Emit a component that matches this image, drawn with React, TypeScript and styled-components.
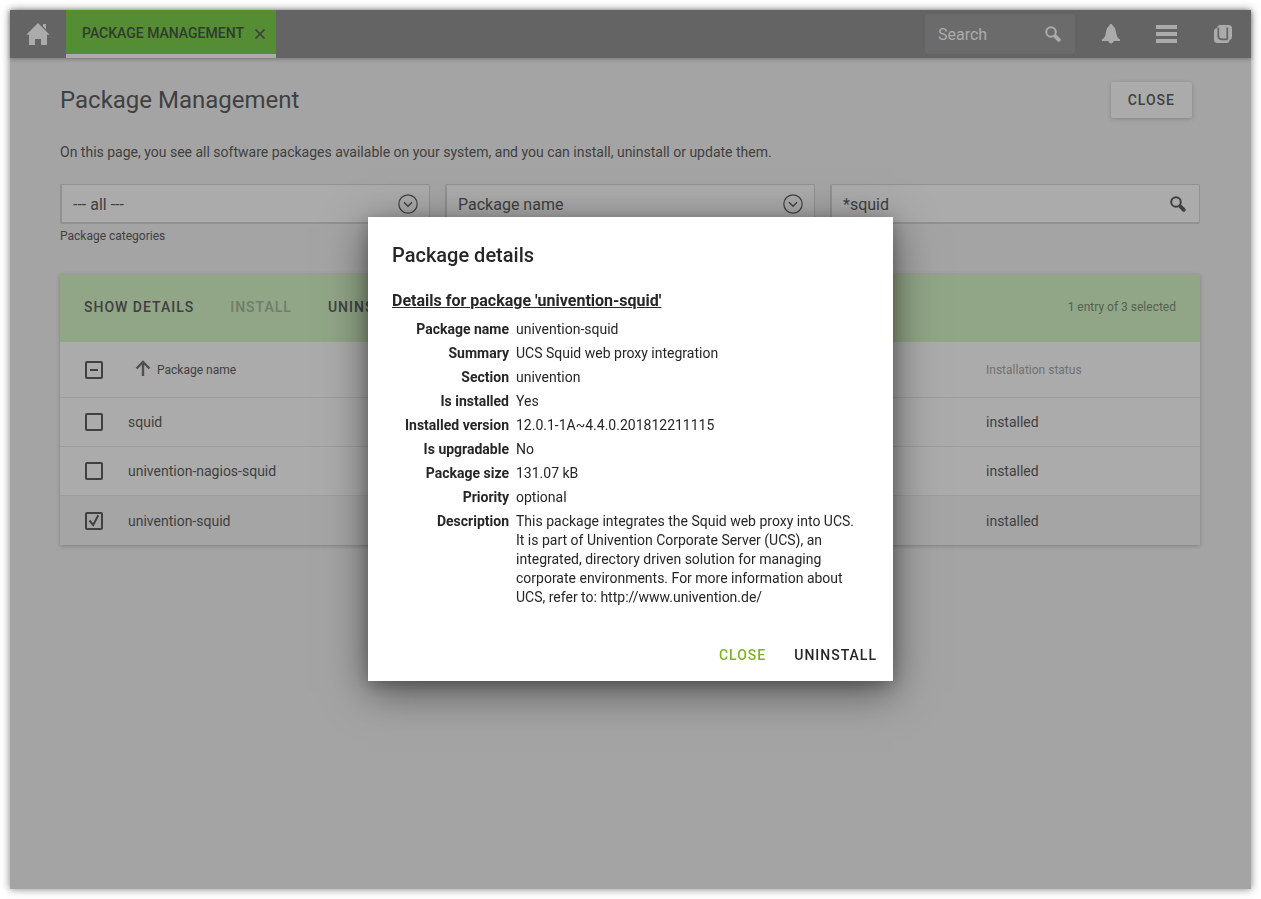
import React from "react";
import styled, { createGlobalStyle } from "styled-components";

const GlobalStyle = createGlobalStyle`
  * { box-sizing: border-box; }
  body {
    margin: 0;
    background: #fff;
    color: #404040;
    font-family: Roboto, "Liberation Sans", sans-serif;
    font-size: 14px;
    line-height: 20px;
  }
  button, input, select { font: inherit; color: inherit; }
  button { border: 0; padding: 0; background: none; cursor: pointer; }
  svg { display: block; }
`;

const Frame = styled.div`
  padding: 10px;
`;

const Desktop = styled.div`
  display: flex;
  flex-direction: column;
  min-height: calc(100vh - 20px);
  background: #a4a4a4;
  box-shadow: 0 0 8px rgba(0, 0, 0, 0.5);
`;

const TopBar = styled.header`
  display: flex;
  align-items: stretch;
  height: 48px;
  background: #646464;
  color: #ababab;
  box-shadow: 0 1px 4px rgba(0, 0, 0, 0.3);
`;

const IconButton = styled.button`
  display: flex;
  align-items: center;
  justify-content: center;
  width: 56px;
`;

const Tab = styled.div`
  display: flex;
  align-items: center;
  gap: 10px;
  padding: 2px 10px 0 16px;
  background: #558d34;
  border-bottom: 4px solid #ababab;
  color: #303c2a;
  font-weight: 500;
`;

const TabClose = styled.button`
  padding: 2px 1px 0;
  color: #404040;
`;

const Spacer = styled.div`
  flex: 1;
`;

const SearchBox = styled.label`
  display: flex;
  align-items: center;
  width: 150px;
  margin: 4px 8px 4px 0;
  padding: 0 14px 0 13px;
  border-radius: 4px;
  background: #6b6b6b;
  font-size: 16px;
`;

const PlainInput = styled.input`
  flex: 1;
  min-width: 0;
  padding: 2px 0 0;
  border: 0;
  outline: 0;
  background: none;
  &::placeholder { color: inherit; opacity: 1; }
`;

const Content = styled.main`
  padding: 24px 51px 24px 50px;
`;

const TitleRow = styled.div`
  display: flex;
  align-items: center;
  justify-content: space-between;
  padding-right: 8px;
`;

const PageTitle = styled.h1`
  margin: 0;
  font-size: 24px;
  font-weight: 400;
  line-height: 36px;
`;

const RaisedButton = styled.button`
  height: 36px;
  padding: 0 17px;
  border-radius: 2px;
  background: #ababab;
  box-shadow: 0 1px 4px rgba(0, 0, 0, 0.2);
  font-weight: 500;
  letter-spacing: 1px;
`;

const Intro = styled.p`
  margin: 24px 0 22px;
`;

const Filters = styled.div`
  display: grid;
  grid-template-columns: repeat(3, 1fr);
  gap: 15px;
`;

const Field = styled.div`
  min-width: 0;
`;

const FieldBox = styled.div`
  position: relative;
  display: flex;
  align-items: center;
  height: 40px;
  padding: 0 13px 0 11px;
  border: solid #919191;
  border-width: 1px 1px 2px 2px;
  border-radius: 2px;
  background: #ababab;
  font-size: 16px;
`;

const Select = styled.select`
  appearance: none;
  flex: 1;
  height: 100%;
  min-width: 0;
  padding: 2px 0 0;
  border: 0;
  outline: 0;
  background: none;
`;

const FieldLabel = styled.label`
  display: block;
  padding-top: 2px;
  font-size: 12px;
`;

const Grid = styled.section`
  margin-top: 28px;
  background: #ababab;
  box-shadow: 0 1px 4px rgba(0, 0, 0, 0.22);
`;

const GridBar = styled.div`
  display: flex;
  align-items: center;
  gap: 36px;
  height: 68px;
  padding: 0 24px 2px;
  background: #91a587;
`;

const TextButton = styled.button<{ $accent?: boolean }>`
  color: ${(p) => (p.$accent ? "#7db523" : "inherit")};
  font-weight: 500;
  letter-spacing: 1px;
  &:disabled { color: #6f7e68; }
`;

const Selection = styled.span`
  margin-left: auto;
  color: #566150;
  font-size: 12px;
`;

const Table = styled.table`
  width: 100%;
  table-layout: fixed;
  border-collapse: separate;
  border-spacing: 0;
  text-align: left;
`;

const CheckCol = styled.col`
  width: 68px;
`;

const StatusCol = styled.col`
  width: 214px;
`;

const HeadCell = styled.th<{ $muted?: boolean }>`
  height: 56px;
  padding: 0;
  border-bottom: 1px solid #9e9e9e;
  color: ${(p) => (p.$muted ? "#717171" : "inherit")};
  font-size: 12px;
  font-weight: 400;
`;

const SortLabel = styled.span`
  display: flex;
  align-items: center;
  gap: 6px;
  padding-left: 7px;
`;

const Row = styled.tr<{ $selected?: boolean }>`
  background: ${(p) => (p.$selected ? "#a5a5a5" : "#ababab")};
`;

const Cell = styled.td`
  height: 49px;
  padding: 0;
  tr:not(:last-child) > & { border-bottom: 1px solid #9e9e9e; }
`;

const CheckWrap = styled.label`
  position: relative;
  display: block;
  width: 18px;
  height: 18px;
  margin-left: 25px;
`;

const Check = styled.input`
  appearance: none;
  display: block;
  width: 18px;
  height: 18px;
  margin: 0;
  border: 2px solid #404040;
  border-radius: 2px;
`;

const CheckMark = styled.svg`
  position: absolute;
  inset: 0;
  pointer-events: none;
`;

const Overlay = styled.div`
  position: fixed;
  inset: 0;
  display: flex;
  align-items: center;
  justify-content: center;
  padding-bottom: 1px;
`;

const Dialog = styled.div`
  width: 525px;
  max-width: 100%;
  padding: 24px 16px 16px 24px;
  background: #fff;
  color: #262626;
  box-shadow: 0 10px 40px rgba(0, 0, 0, 0.5), 0 4px 14px rgba(0, 0, 0, 0.22);
`;

const DialogTitle = styled.h2`
  margin: 0;
  font-size: 20px;
  font-weight: 500;
  line-height: 28px;
`;

const DetailsTitle = styled.h3`
  margin: 20px 0 7px;
  font-size: 16px;
  font-weight: 700;
  line-height: 24px;
  text-decoration: underline;
`;

const Details = styled.table`
  border-collapse: collapse;
  width: 468px;
  max-width: 100%;
  line-height: 19px;
`;

const Term = styled.th`
  width: 117px;
  padding: 0 0 5px;
  font-weight: 700;
  text-align: right;
  vertical-align: top;
  white-space: nowrap;
`;

const Value = styled.td`
  padding: 0 0 5px 7px;
  vertical-align: top;
`;

const Actions = styled.div`
  display: flex;
  justify-content: flex-end;
  gap: 28px;
  height: 20px;
  margin-top: 33px;
`;

const Magnifier = () => (
  <svg width="16" height="16" viewBox="0 0 16 16" fill="none" stroke="currentColor" aria-hidden="true">
    <circle cx="6" cy="6" r="4.8" strokeWidth="2" />
    <path d="M9.3 9.3l1.2 1.2" strokeWidth="2" />
    <path d="M10.600 10.600l3.200 3.200" strokeWidth="3.800" strokeLinecap="round" />
  </svg>
);

const Chevron = styled.svg`
  position: absolute;
  right: 11px;
  pointer-events: none;
`;

const ChevronCircle = () => (
  <Chevron width="20" height="20" viewBox="0 0 20 20" fill="none" stroke="currentColor" aria-hidden="true">
    <circle cx="10" cy="10" r="9.2" strokeWidth="1.2" />
    <path d="M6 8.3l4 4 4-4" strokeWidth="1.4" />
  </Chevron>
);

const rows = [
  { name: "squid", selected: false },
  { name: "univention-nagios-squid", selected: false },
  { name: "univention-squid", selected: true },
];

const details = [
  ["Package name", "univention-squid"],
  ["Summary", "UCS Squid web proxy integration"],
  ["Section", "univention"],
  ["Is installed", "Yes"],
  ["Installed version", "12.0.1-1A~4.4.0.201812211115"],
  ["Is upgradable", "No"],
  ["Package size", "131.07 kB"],
  ["Priority", "optional"],
  [
    "Description",
    "This package integrates the Squid web proxy into UCS. It is part of Univention Corporate Server (UCS), an integrated, directory driven solution for managing corporate environments. For more information about UCS, refer to: http://www.univention.de/",
  ],
];

export default function App() {
  return (
    <Frame>
      <GlobalStyle />
      <Desktop>
        <TopBar>
          <IconButton aria-label="Home">
            <svg width="24" height="24" viewBox="0 0 24 24" fill="currentColor">
              <path d="M12 1L.3 12.700H3V23h6v-6h6v6h6V12.700h2.700z" />
              <path d="M17 2h3v5.300l-3-3z" />
            </svg>
          </IconButton>
          <Tab>
            <span>PACKAGE MANAGEMENT</span>
            <TabClose aria-label="Close tab">
              <svg width="10" height="10" viewBox="0 0 10 10" fill="none" stroke="currentColor" strokeWidth="1.6">
                <path d="M.5.5l9 9M9.500.5l-9 9" />
              </svg>
            </TabClose>
          </Tab>
          <Spacer />
          <SearchBox>
            <PlainInput placeholder="Search" aria-label="Search" />
            <Magnifier />
          </SearchBox>
          <IconButton aria-label="Notifications">
            <svg width="18" height="20" viewBox="0 0 18 20" fill="currentColor">
              <path d="M9 0c1 0 1.500.7 1.800 1.700 1.900 1.300 2.800 3.500 3.200 6.300.5 3.800 1.400 6.300 4 7.500V17h-6.300c-.4 1.500-1.300 2.500-2.700 2.500S6.700 18.500 6.300 17H0v-1.500c2.600-1.200 3.500-3.700 4-7.500.4-2.800 1.300-5 3.200-6.300C7.500.7 8 0 9 0z" />
            </svg>
          </IconButton>
          <IconButton aria-label="Menu">
            <svg width="22" height="18" viewBox="0 0 22 18" fill="currentColor">
              <path d="M0 0h21v4H0zM0 7h21v4H0zM0 14h21v4H0z" />
            </svg>
          </IconButton>
          <IconButton aria-label="Univention">
            <svg width="18" height="18" viewBox="0 0 18 18" fill="currentColor">
              <rect x="3" y="0" width="15" height="15" rx="3.500" />
              <rect x="0" y="3" width="15.500" height="15" rx="3.500" />
              <path d="M4.300 2.500v8.500q0 3.300 3.300 3.300h6M13.300 2.500v11.800" fill="none" stroke="#646464" strokeWidth="1.700" />
            </svg>
          </IconButton>
        </TopBar>
        <Content>
          <TitleRow>
            <PageTitle>Package Management</PageTitle>
            <RaisedButton>CLOSE</RaisedButton>
          </TitleRow>
          <Intro>
            On this page, you see all software packages available on your system, and you can install, uninstall or update them.
          </Intro>
          <Filters>
            <Field>
              <FieldBox>
                <Select id="category"><option>--- all ---</option></Select>
                <ChevronCircle />
              </FieldBox>
              <FieldLabel htmlFor="category">Package categories</FieldLabel>
            </Field>
            <Field>
              <FieldBox>
                <Select aria-label="Search attribute"><option>Package name</option></Select>
                <ChevronCircle />
              </FieldBox>
            </Field>
            <Field>
              <FieldBox>
                <PlainInput aria-label="Package name" defaultValue="*squid" />
                <Magnifier />
              </FieldBox>
            </Field>
          </Filters>
          <Grid>
            <GridBar>
              <TextButton>SHOW DETAILS</TextButton>
              <TextButton disabled>INSTALL</TextButton>
              <TextButton>UNINSTALL</TextButton>
              <Selection>1 entry of 3 selected</Selection>
            </GridBar>
            <Table>
              <colgroup>
                <CheckCol />
                <col />
                <StatusCol />
              </colgroup>
              <thead>
                <tr>
                  <HeadCell>
                    <CheckWrap>
                      <Check type="checkbox" aria-label="Select all" />
                      <CheckMark width="18" height="18" viewBox="0 0 18 18" fill="none" stroke="#404040" strokeWidth="2">
                        <path d="M5 9h8" />
                      </CheckMark>
                    </CheckWrap>
                  </HeadCell>
                  <HeadCell>
                    <SortLabel>
                      <svg width="16" height="20" viewBox="0 0 16 20" fill="none" stroke="#505050" strokeWidth="2.4">
                        <path d="M8 16V2M1.500 8.500L8 2l6.500 6.500" />
                      </svg>
                      Package name
                    </SortLabel>
                  </HeadCell>
                  <HeadCell $muted>Installation status</HeadCell>
                </tr>
              </thead>
              <tbody>
                {rows.map((r) => (
                  <Row key={r.name} $selected={r.selected}>
                    <Cell>
                      <CheckWrap>
                        <Check type="checkbox" aria-label={r.name} defaultChecked={r.selected} />
                        {r.selected && (
                          <CheckMark width="18" height="18" viewBox="0 0 18 18" fill="none" stroke="#404040" strokeWidth="2">
                            <path d="M4.500 8.500l3.700 4.500L13.300 3.300" />
                          </CheckMark>
                        )}
                      </CheckWrap>
                    </Cell>
                    <Cell>{r.name}</Cell>
                    <Cell>installed</Cell>
                  </Row>
                ))}
              </tbody>
            </Table>
          </Grid>
        </Content>
      </Desktop>
      <Overlay>
        <Dialog role="dialog" aria-modal="true" aria-labelledby="dialog-title">
          <DialogTitle id="dialog-title">Package details</DialogTitle>
          <DetailsTitle>Details for package 'univention-squid'</DetailsTitle>
          <Details>
            <tbody>
              {details.map(([term, value]) => (
                <tr key={term}>
                  <Term scope="row">{term}</Term>
                  <Value>{value}</Value>
                </tr>
              ))}
            </tbody>
          </Details>
          <Actions>
            <TextButton $accent>CLOSE</TextButton>
            <TextButton>UNINSTALL</TextButton>
          </Actions>
        </Dialog>
      </Overlay>
    </Frame>
  );
}
